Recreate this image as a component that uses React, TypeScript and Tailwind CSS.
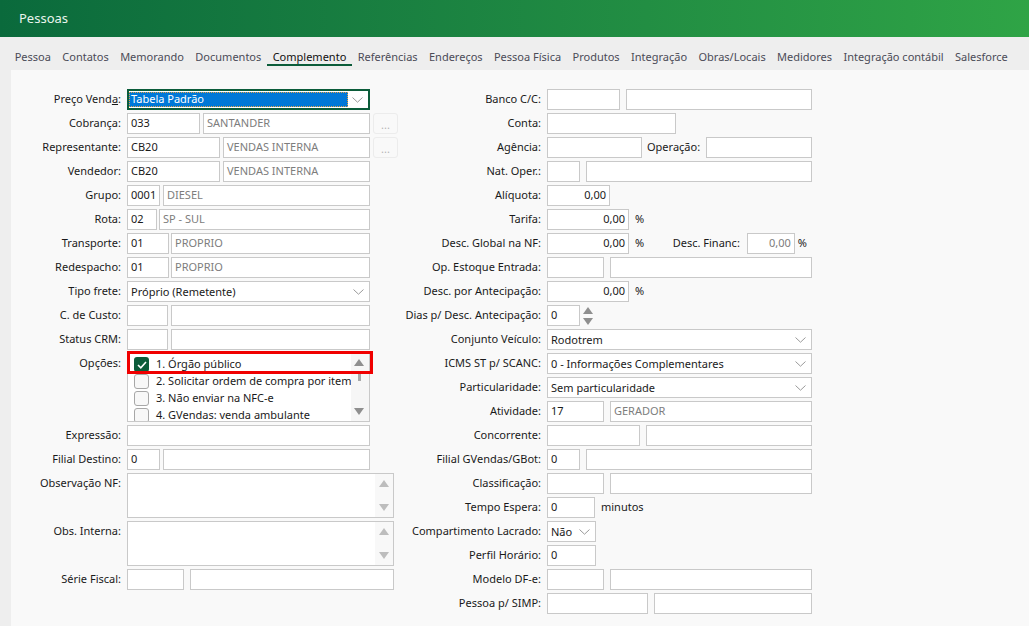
import type { ReactNode } from 'react'

const font = "font-['Noto_Sans','Open_Sans',sans-serif]"

const tabs = [
  'Pessoa',
  'Contatos',
  'Memorando',
  'Documentos',
  'Complemento',
  'Referências',
  'Endereços',
  'Pessoa Física',
  'Produtos',
  'Integração',
  'Obras/Locais',
  'Medidores',
  'Integração contábil',
  'Salesforce',
]

const options = [
  '1. Órgão público',
  '2. Solicitar ordem de compra por item',
  '3. Não enviar na NFC-e',
  '4. GVendas: venda ambulante',
]

function Chevron() {
  return (
    <svg width="11" height="6" viewBox="0 0 11 6" fill="none" className="shrink-0">
      <path d="M0.5 0.5 L5.5 5.2 L10.5 0.5" stroke="#9a9a9a" strokeWidth="1" />
    </svg>
  )
}

function Arrow({ down = false, color = '#8f8f8f' }: { down?: boolean; color?: string }) {
  return (
    <svg width="10" height="7" viewBox="0 0 10 7" className="shrink-0">
      <path d={down ? 'M0 0 H10 L5 7 Z' : 'M0 7 H10 L5 0 Z'} fill={color} />
    </svg>
  )
}

function Field({
  className = 'flex-1',
  value,
  muted = false,
  right = false,
}: {
  className?: string
  value?: string
  muted?: boolean
  right?: boolean
}) {
  return (
    <div
      className={`flex h-[21px] items-center overflow-hidden whitespace-nowrap border border-[#c9c9c9] bg-white px-[3px] pb-[1px] ${
        right ? 'justify-end' : ''
      } ${muted ? 'text-[#7d7d7d]' : 'text-[#1a1a1a]'} ${className}`}
    >
      {value}
    </div>
  )
}

function Select({ className = 'flex-1', value }: { className?: string; value: string }) {
  return (
    <div
      className={`flex h-[21px] items-center justify-between border border-[#c9c9c9] bg-white pl-[3px] pr-[5px] text-[#1a1a1a] ${className}`}
    >
      <span className="pt-[2px]">{value}</span>
      <Chevron />
    </div>
  )
}

function Row({
  label,
  width,
  tall = false,
  children,
}: {
  label: ReactNode
  width: string
  tall?: boolean
  children: ReactNode
}) {
  return (
    <div className="flex gap-[6px]">
      <div className={`${width} ${tall ? 'pt-[2px]' : 'leading-[19px]'} shrink-0 whitespace-nowrap text-right text-[#1a1a1a]`}>
        {label}
      </div>
      <div className="flex min-w-0 flex-1 items-center">{children}</div>
    </div>
  )
}

function Pair({
  first,
  muted = false,
  firstValue,
  secondValue,
  gap = 'gap-[3px]',
  className = 'flex-1',
}: {
  first: string
  muted?: boolean
  firstValue?: string
  secondValue?: string
  gap?: string
  className?: string
}) {
  return (
    <div className={`flex ${gap} ${className}`}>
      <Field className={`${first} shrink-0`} value={firstValue} />
      <Field className="flex-1" value={secondValue} muted={muted} />
    </div>
  )
}

function Dots() {
  return (
    <div className="ml-[3px] flex h-[21px] w-[25px] shrink-0 items-center justify-center rounded-[3px] border border-[#ececec] bg-[#f9f9f9] pt-[3px] text-[#b5b5b5]">
      ...
    </div>
  )
}

function MemoBox() {
  return (
    <div className="flex h-[45px] w-[267px] justify-end border border-[#c9c9c9] bg-white">
      <div className="flex w-[18px] flex-col items-center justify-between bg-[#f8f8f8] py-[6px]">
        <Arrow color="#bdbdbd" />
        <Arrow down color="#bdbdbd" />
      </div>
    </div>
  )
}

function OptionsList() {
  return (
    <div className="relative w-[243px]">
      <div className="flex h-[69px] overflow-hidden border border-[#c9c9c9] bg-white">
        <div className="min-w-0 flex-1 pl-[6px] pt-[2px]">
          {options.map((text, i) => (
            <div key={text} className="flex h-[17px] items-center gap-[7px] whitespace-nowrap text-[#1a1a1a]">
              {i === 0 ? (
                <div className="flex h-[15px] w-[15px] shrink-0 items-center justify-center rounded-[3px] bg-[#0b5c3a]">
                  <svg width="10" height="8" viewBox="0 0 10 8" fill="none">
                    <path d="M1 4 L3.8 6.8 L9 1" stroke="#fff" strokeWidth="1.6" />
                  </svg>
                </div>
              ) : (
                <div className="h-[15px] w-[15px] shrink-0 rounded-[3px] border border-[#a8a8a8] bg-[#f8f8f8]" />
              )}
              <span>{text}</span>
            </div>
          ))}
        </div>
        <div className="flex w-[18px] flex-col items-center bg-[#f6f6f6] pr-[2px] pt-[5px]">
          <Arrow />
          <div className="mt-[8px] h-[7px] w-[3px] bg-[#a8a8a8]" />
          <div className="mt-auto mb-[6px]">
            <Arrow down />
          </div>
        </div>
      </div>
      {/* destaque em vermelho sobre o primeiro item */}
      <div className="absolute -top-[2px] left-0 h-[23px] w-[246px] border-[3px] border-[#f00000]" />
    </div>
  )
}

function LeftColumn() {
  const w = 'w-[110px]'
  return (
    <div className="flex w-[387px] shrink-0 flex-col gap-[3px]">
      <Row label={<>Preço Vend<span className="underline">a</span>:</>} width={w}>
        <div className="flex h-[21px] w-[243px] items-center border-2 border-[#0b5c3a] bg-white pr-[5px]">
          <div className="flex h-[15px] flex-1 items-center border border-dotted border-[#e8a33c] bg-[#0078d7] pl-[1px] text-white">
            Tabela Padrão
          </div>
          <div className="ml-[4px]">
            <Chevron />
          </div>
        </div>
      </Row>
      <Row label="Cobrança:" width={w}>
        <Pair className="w-[243px] shrink-0" first="w-[73px]" firstValue="033" secondValue="SANTANDER" muted />
        <Dots />
      </Row>
      <Row label="Representante:" width={w}>
        <Pair className="w-[243px] shrink-0" first="w-[93px]" firstValue="CB20" secondValue="VENDAS INTERNA" muted />
        <Dots />
      </Row>
      <Row label="Vendedor:" width={w}>
        <Pair className="w-[243px] shrink-0" first="w-[93px]" firstValue="CB20" secondValue="VENDAS INTERNA" muted />
      </Row>
      <Row label="Grupo:" width={w}>
        <Pair className="w-[243px] shrink-0" first="w-[33px]" firstValue="0001" secondValue="DIESEL" muted />
      </Row>
      <Row label="Rota:" width={w}>
        <Pair className="w-[243px] shrink-0" first="w-[30px]" firstValue="02" secondValue="SP - SUL" muted gap="gap-[2px]" />
      </Row>
      <Row label="Transporte:" width={w}>
        <Pair className="w-[243px] shrink-0" first="w-[42px]" firstValue="01" secondValue="PROPRIO" muted gap="gap-[2px]" />
      </Row>
      <Row label="Redespacho:" width={w}>
        <Pair className="w-[243px] shrink-0" first="w-[42px]" firstValue="01" secondValue="PROPRIO" muted gap="gap-[2px]" />
      </Row>
      <Row label="Tipo frete:" width={w}>
        <Select className="w-[243px] flex-none" value="Próprio (Remetente)" />
      </Row>
      <Row label="C. de Custo:" width={w}>
        <Pair className="w-[243px] shrink-0" first="w-[41px]" />
      </Row>
      <Row label="Status CRM:" width={w}>
        <Pair className="w-[243px] shrink-0" first="w-[41px]" />
      </Row>
      <Row label="Opções:" width={w} tall>
        <OptionsList />
      </Row>
      <Row label="Expressão:" width={w}>
        <Field className="w-[243px]" />
      </Row>
      <Row label="Filial Destino:" width={w}>
        <Pair className="w-[243px] shrink-0" first="w-[33px]" firstValue="0" />
      </Row>
      <Row label="Observação NF:" width={w} tall>
        <MemoBox />
      </Row>
      <Row label="Obs. Interna:" width={w} tall>
        <MemoBox />
      </Row>
      <Row label="Série Fiscal:" width={w}>
        <Pair className="w-[267px] shrink-0" first="w-[57px]" gap="gap-[6px]" />
      </Row>
    </div>
  )
}

function Unit({ children }: { children: ReactNode }) {
  return <span className="ml-[6px] text-[#1a1a1a]">{children}</span>
}

function RightColumn() {
  const w = 'w-[140px]'
  return (
    <div className="ml-[3px] flex w-[411px] shrink-0 flex-col gap-[3px]">
      <Row label="Banco C/C:" width={w}>
        <Pair first="w-[73px]" gap="gap-[6px]" />
      </Row>
      <Row label="Conta:" width={w}>
        <Field className="w-[129px]" />
      </Row>
      <Row label="Agência:" width={w}>
        <Field className="w-[95px]" />
        <span className="ml-[5px] text-[#1a1a1a]">Operação:</span>
        <Field className="ml-auto w-[106px]" />
      </Row>
      <Row label="Nat. Oper.:" width={w}>
        <Pair first="w-[33px]" gap="gap-[6px]" />
      </Row>
      <Row label="Alíquota:" width={w}>
        <Field className="w-[63px]" value="0,00" right />
      </Row>
      <Row label="Tarifa:" width={w}>
        <Field className="w-[82px]" value="0,00" right />
        <Unit>%</Unit>
      </Row>
      <Row label="Desc. Global na NF:" width={w}>
        <Field className="w-[82px]" value="0,00" right />
        <Unit>%</Unit>
        <span className="ml-auto mr-[7px] text-[#1a1a1a]">Desc. Financ:</span>
        <Field className="w-[48px]" value="0,00" right muted />
        <span className="ml-[3px] mr-[5px] text-[#1a1a1a]">%</span>
      </Row>
      <Row label="Op. Estoque Entrada:" width={w}>
        <Pair first="w-[57px]" gap="gap-[6px]" />
      </Row>
      <Row label="Desc. por Antecipação:" width={w}>
        <Field className="w-[82px]" value="0,00" right />
        <Unit>%</Unit>
      </Row>
      <Row label="Dias p/ Desc. Antecipação:" width={w}>
        <Field className="w-[33px]" value="0" />
        <div className="ml-[3px] flex flex-col gap-[4px]">
          <Arrow />
          <Arrow down />
        </div>
      </Row>
      <Row label="Conjunto Veículo:" width={w}>
        <Select value="Rodotrem" />
      </Row>
      <Row label="ICMS ST p/ SCANC:" width={w}>
        <Select value="0 - Informações Complementares" />
      </Row>
      <Row label="Particularidade:" width={w}>
        <Select value="Sem particularidade" />
      </Row>
      <Row label="Atividade:" width={w}>
        <Pair first="w-[57px]" firstValue="17" secondValue="GERADOR" muted gap="gap-[6px]" />
      </Row>
      <Row label="Concorrente:" width={w}>
        <Pair first="w-[93px]" gap="gap-[6px]" />
      </Row>
      <Row label="Filial GVendas/GBot:" width={w}>
        <Pair first="w-[33px]" firstValue="0" gap="gap-[6px]" />
      </Row>
      <Row label="Classificação:" width={w}>
        <Pair first="w-[57px]" gap="gap-[6px]" />
      </Row>
      <Row label="Tempo Espera:" width={w}>
        <Field className="w-[48px]" value="0" />
        <Unit>minutos</Unit>
      </Row>
      <Row label="Compartimento Lacrado:" width={w}>
        <Select className="w-[49px] flex-none" value="Não" />
      </Row>
      <Row label="Perfil Horário:" width={w}>
        <Field className="w-[49px]" value="0" />
      </Row>
      <Row label="Modelo DF-e:" width={w}>
        <Pair first="w-[57px]" gap="gap-[6px]" />
      </Row>
      <Row label="Pessoa p/ SIMP:" width={w}>
        <Pair first="w-[101px]" gap="gap-[6px]" />
      </Row>
    </div>
  )
}

export default function App() {
  return (
    <div className={`flex h-[626px] w-[1029px] flex-col overflow-hidden bg-[#eeeeee] text-[11px] ${font}`}>
      <header className="flex h-[37px] shrink-0 items-center bg-gradient-to-r from-[#0a6a3c] to-[#2fa446] pl-[19px] pt-[1px] text-[13px] text-[#eaf5ee]">
        Pessoas
      </header>
      <nav className="flex h-[33px] shrink-0 items-start pl-[9px] pt-[11px]">
        {tabs.map((tab) => (
          <div
            key={tab}
            className={`h-[18px] whitespace-nowrap border-b-2 px-[5.7px] leading-[18px] ${
              tab === 'Complemento' ? 'border-[#0b5c3a] text-[#111111]' : 'border-transparent text-[#4b4b57]'
            }`}
          >
            {tab}
          </div>
        ))}
      </nav>
      <main className="ml-[11px] flex flex-1 bg-[#f9f9f9] pt-[19px]">
        <LeftColumn />
        <RightColumn />
      </main>
    </div>
  )
}
